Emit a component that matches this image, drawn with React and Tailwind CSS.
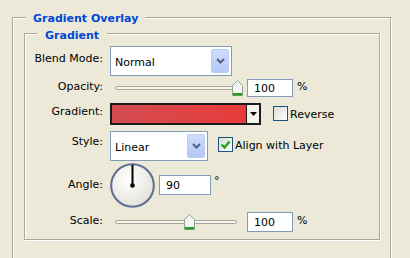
import React from "react";

function Chevron() {
  return (
    <div className="mt-[2px] mr-[2px] w-[18px] h-[24px] rounded-[2px] border border-[#b9cdf6] bg-gradient-to-b from-[#cfdcfd] to-[#b5c9f6] flex items-center justify-center">
      <svg width="9" height="6" viewBox="0 0 9 6">
        <path d="M1 1L4.5 4.5L8 1" fill="none" stroke="#4d6185" strokeWidth="2" />
      </svg>
    </div>
  );
}

function Select({ value, width }) {
  return (
    <div className={`ml-[7px] h-[30px] flex border border-[#7f9db9] bg-white ${width}`}>
      <span className="flex-1 pl-[4px] pt-[9px]">{value}</span>
      <Chevron />
    </div>
  );
}

function Thumb() {
  return (
    <svg width="11" height="16" viewBox="0 0 11 16">
      <path d="M0.5 15.5V5.5L5.5 0.5L10.5 5.5V15.5Z" fill="#f5f5f1" stroke="#8ea393" />
      <rect x="1" y="13" width="9" height="2.5" fill="#21a121" />
    </svg>
  );
}

function Checkbox({ checked }) {
  return (
    <div className="w-[15px] h-[15px] border border-[#1c5180] bg-gradient-to-br from-[#dcdcd5] to-white flex items-center justify-center">
      {checked && (
        <svg width="11" height="10" viewBox="0 0 11 10">
          <path d="M1.5 4.5L4.5 7.5L9.5 1.5" fill="none" stroke="#21a121" strokeWidth="2.4" />
        </svg>
      )}
    </div>
  );
}

function NumBox({ value, width, height }) {
  return (
    <div className={`flex items-center pl-[6px] border border-[#7f9db9] bg-white ${width} ${height}`}>
      {value}
    </div>
  );
}

function App() {
  return (
    <div className="w-[410px] h-[258px] overflow-hidden bg-[#ece9d8] pl-[12px] pt-[17px] font-['DejaVu_Sans',sans-serif] text-[11px] leading-[13px] text-black">
      <div className="relative w-[379px] h-[260px] border border-[#aca899] shadow-[1px_1px_0_#fff,inset_1px_1px_0_#fff] pl-[11px] pt-[15px]">
        <span className="absolute left-[13px] top-[-6px] bg-[#ece9d8] px-[7px] font-bold text-[#0046d5]">
          Gradient Overlay
        </span>

        <div className="relative w-[356px] h-[207px] border border-[#aca899] shadow-[1px_1px_0_#fff,inset_1px_1px_0_#fff] pt-[12px]">
          <span className="absolute left-[12px] top-[-5px] bg-[#ece9d8] px-[8px] font-bold text-[#0046d5]">
            Gradient
          </span>

          {/* Blend mode */}
          <div className="flex h-[30px]">
            <span className="w-[78px] text-right mt-[6px]">Blend Mode:</span>
            <Select value="Normal" width="w-[122px]" />
          </div>

          {/* Opacity */}
          <div className="flex h-[18px] mt-[3px]">
            <span className="w-[78px] text-right mt-[1px]">Opacity:</span>
            <div className="relative ml-[12px] w-[122px] h-[18px]">
              <div className="absolute left-0 right-0 top-[7px] h-[4px] rounded-full border border-[#a8a698] bg-[#f6f5f0]" />
              <div className="absolute top-[1px] left-[117px] flex">
                <Thumb />
              </div>
            </div>
            <div className="ml-[10px]">
              <NumBox value="100" width="w-[46px]" height="h-[18px]" />
            </div>
            <span className="ml-[4px] mt-[1px]">%</span>
          </div>

          {/* Gradient */}
          <div className="flex h-[22px] mt-[6px]">
            <span className="w-[78px] text-right mt-[2px]">Gradient:</span>
            <div className="ml-[7px] flex w-[151px] h-[22px] border-2 border-[#1b1b1b]">
              <div className="flex-1 bg-gradient-to-r from-[#d24c51] to-[#e93a3a] border-r border-[#1b1b1b]" />
              <div className="w-[12px] flex items-center justify-center bg-[#f3f2ec]">
                <svg width="7" height="4" viewBox="0 0 7 4">
                  <path d="M0 0H7L3.5 4Z" fill="#000" />
                </svg>
              </div>
            </div>
            <div className="ml-[12px] mt-[3px]">
              <Checkbox />
            </div>
            <span className="ml-[2px] mt-[5px]">Reverse</span>
          </div>

          {/* Style */}
          <div className="flex h-[30px] mt-[6px]">
            <span className="w-[78px] text-right mt-[4px]">Style:</span>
            <Select value="Linear" width="w-[98px]" />
            <div className="ml-[10px] mt-[6px]">
              <Checkbox checked />
            </div>
            <span className="ml-[2px] mt-[8px]">Align with Layer</span>
          </div>

          {/* Angle */}
          <div className="flex h-[45px] mt-[2px]">
            <span className="w-[78px] text-right mt-[15px]">Angle:</span>
            <svg className="ml-[7px]" width="45" height="45" viewBox="0 0 45 45">
              <defs>
                <radialGradient id="dial" cx="40%" cy="35%" r="70%">
                  <stop offset="0%" stopColor="#ffffff" />
                  <stop offset="100%" stopColor="#e2e1da" />
                </radialGradient>
              </defs>
              <circle cx="22.5" cy="22.5" r="21.3" fill="url(#dial)" stroke="#5b6c94" strokeWidth="2" />
              <path d="M22.5 22.5V2" stroke="#000" strokeWidth="2" />
              <circle cx="22.5" cy="22.5" r="2.3" fill="#000" />
            </svg>
            <div className="ml-[4px] mt-[12px]">
              <NumBox value="90" width="w-[52px]" height="h-[20px]" />
            </div>
            <span className="ml-[3px] mt-[11px]">°</span>
          </div>

          {/* Scale */}
          <div className="flex h-[20px] mt-[4px]">
            <span className="w-[78px] text-right mt-[2px]">Scale:</span>
            <div className="relative ml-[12px] w-[122px] h-[20px]">
              <div className="absolute left-0 right-0 top-[8px] h-[4px] rounded-full border border-[#a8a698] bg-[#f6f5f0]" />
              <div className="absolute top-[2px] left-[69px] flex">
                <Thumb />
              </div>
            </div>
            <div className="ml-[10px]">
              <NumBox value="100" width="w-[46px]" height="h-[20px]" />
            </div>
            <span className="ml-[4px] mt-[2px]">%</span>
          </div>
        </div>
      </div>
    </div>
  );
}

export default App;
